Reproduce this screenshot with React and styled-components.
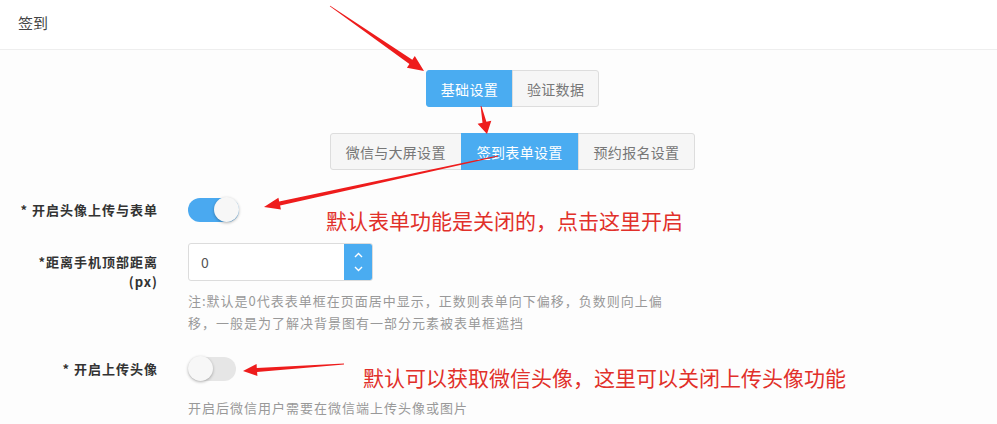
import React from 'react';
import styled, { createGlobalStyle } from 'styled-components';

const GlobalStyle = createGlobalStyle`
  html, body {
    margin: 0;
    padding: 0;
    background: #fdfdfd;
  }
  body {
    font-family: "Microsoft YaHei", "Noto Sans CJK SC", "Noto Sans", sans-serif;
    color: #333;
  }
`;

const Page = styled.div`
  position: relative;
  width: 997px;
  height: 424px;
  overflow: hidden;
  background: #fdfdfd;
`;

const Header = styled.div`
  height: 49px;
  padding-left: 18px;
  line-height: 45px;
  font-size: 15px;
  color: #444;
  border-bottom: 1px solid #eeeeee;
  background: #fff;
`;

const Tabs = styled.div`
  display: flex;
  flex-direction: column;
  align-items: center;
  gap: 26px;
  padding: 20px 0 0 28px;
`;

const TabRow = styled.div`
  display: flex;
`;

const Tab = styled.div`
  height: 37px;
  box-sizing: border-box;
  padding: 0 ${p => p.$pad || 15}px;
  display: flex;
  align-items: center;
  font-size: 14px;
  letter-spacing: 0.3px;
  color: ${p => (p.$active ? '#fff' : '#777')};
  background: ${p => (p.$active ? '#4aacf1' : '#f6f6f6')};
  border: 1px solid ${p => (p.$active ? '#4aacf1' : '#dddddd')};
  margin-left: -1px;
  &:first-child {
    border-radius: 3px 0 0 3px;
    margin-left: 0;
  }
  &:last-child {
    border-radius: 0 3px 3px 0;
  }
`;

const Form = styled.div`
  margin-top: 28px;
`;

const Row = styled.div`
  display: flex;
  align-items: flex-start;
  margin-top: ${p => p.$top || 0}px;
`;

const Label = styled.div`
  width: 158px;
  flex: none;
  margin-right: 30px;
  text-align: right;
  font-size: 13px;
  letter-spacing: 1px;
  font-weight: bold;
  color: #333;
  line-height: ${p => p.$lh || 24}px;
  padding-top: ${p => p.$pt || 0}px;
`;

const Field = styled.div`
  display: flex;
  flex-direction: column;
`;

const Switch = styled.div`
  position: relative;
  width: ${p => (p.$on ? 51 : 48)}px;
  height: 24px;
  border-radius: 12px;
  background: ${p => (p.$on ? '#4aa9f0' : '#e6e6e6')};
  &::after {
    content: '';
    position: absolute;
    top: -1px;
    ${p => (p.$on ? 'right: 0;' : 'left: 0;')}
    width: 25px;
    height: 25px;
    border-radius: 50%;
    background: #f7f7f7;
    box-shadow: 0 1px 3px rgba(0, 0, 0, 0.3);
  }
`;

const NumberBox = styled.div`
  display: flex;
  width: 185px;
  height: 38px;
  box-sizing: border-box;
  border: 1px solid #dcdcdc;
  border-radius: 3px;
  background: #fff;
  overflow: hidden;
`;

const NumberValue = styled.div`
  flex: 1;
  padding-left: 12px;
  line-height: 36px;
  font-size: 14px;
  color: #555;
`;

const Spinner = styled.div`
  width: 28px;
  background: #4aacf1;
  display: flex;
  flex-direction: column;
  align-items: center;
  justify-content: space-around;
  padding: 4px 0;
  box-sizing: border-box;
`;

const Help = styled.div`
  width: 478px;
  margin-top: ${p => p.$top || 9}px;
  font-size: 13px;
  letter-spacing: 1px;
  line-height: 22px;
  color: #999;
`;

const Note = styled.div`
  position: absolute;
  left: ${p => p.$x}px;
  top: ${p => p.$y}px;
  font-size: 21px;
  line-height: 26px;
  color: #e1302a;
  white-space: nowrap;
`;

const Overlay = styled.svg`
  position: absolute;
  left: 0;
  top: 0;
  pointer-events: none;
`;

// tapered arrow: thin tail, wider shaft near the head, triangular head
function arrowPoints([tx, ty], [px, py], head = 14, headW = 7, shaftW = 4) {
  const len = Math.hypot(px - tx, py - ty);
  const dx = (px - tx) / len;
  const dy = (py - ty) / len;
  const nx = -dy;
  const ny = dx;
  const bx = px - dx * head;
  const by = py - dy * head;
  const pts = [
    [tx + nx * 0.4, ty + ny * 0.4],
    [bx + nx * shaftW / 2, by + ny * shaftW / 2],
    [bx + nx * headW, by + ny * headW],
    [px, py],
    [bx - nx * headW, by - ny * headW],
    [bx - nx * shaftW / 2, by - ny * shaftW / 2],
    [tx - nx * 0.4, ty - ny * 0.4],
  ];
  return pts.map(p => p.map(v => v.toFixed(1)).join(',')).join(' ');
}

const arrows = [
  { from: [330, 6], to: [424, 71], head: 16, headW: 7, shaftW: 5 },
  { from: [481, 106], to: [487, 134], head: 12, headW: 7, shaftW: 4 },
  { from: [498, 156], to: [264, 207], head: 16, headW: 6, shaftW: 4 },
  { from: [344, 364], to: [243, 371], head: 14, headW: 6, shaftW: 4 },
];

const Chevron = ({ up }) => (
  <svg width="9" height="6" viewBox="0 0 9 6">
    <path
      d={up ? 'M1 5 L4.5 1.5 L8 5' : 'M1 1 L4.5 4.5 L8 1'}
      fill="none"
      stroke="#fff"
      strokeWidth="1.4"
    />
  </svg>
);

export default function App() {
  return (
    <Page>
      <GlobalStyle />
      <Header>签到</Header>

      <Tabs>
        <TabRow>
          <Tab $active $pad={14}>基础设置</Tab>
          <Tab $pad={14}>验证数据</Tab>
        </TabRow>
        <TabRow>
          <Tab $pad={15}>微信与大屏设置</Tab>
          <Tab $active $pad={15}>签到表单设置</Tab>
          <Tab $pad={15}>预约报名设置</Tab>
        </TabRow>
      </Tabs>

      <Form>
        <Row>
          <Label>* 开启头像上传与表单</Label>
          <Switch $on />
        </Row>

        <Row $top={21}>
          <Label $lh={20} $pt={9}>
            *距离手机顶部距离
            <br />
            (px)
          </Label>
          <Field>
            <NumberBox>
              <NumberValue>0</NumberValue>
              <Spinner>
                <Chevron up />
                <Chevron />
              </Spinner>
            </NumberBox>
            <Help>
              注:默认是0代表表单框在页面居中显示，正数则表单向下偏移，负数则向上偏移，一般是为了解决背景图有一部分元素被表单框遮挡
            </Help>
          </Field>
        </Row>

        <Row $top={23}>
          <Label>* 开启上传头像</Label>
          <Field>
            <Switch />
            <Help $top={16}>开启后微信用户需要在微信端上传头像或图片</Help>
          </Field>
        </Row>
      </Form>

      <Note $x={326} $y={207}>默认表单功能是关闭的，点击这里开启</Note>
      <Note $x={363} $y={364}>默认可以获取微信头像，这里可以关闭上传头像功能</Note>

      <Overlay width="997" height="424">
        {arrows.map((a, i) => (
          <polygon
            key={i}
            points={arrowPoints(a.from, a.to, a.head, a.headW, a.shaftW)}
            fill="#ee1c1c"
          />
        ))}
      </Overlay>
    </Page>
  );
}
